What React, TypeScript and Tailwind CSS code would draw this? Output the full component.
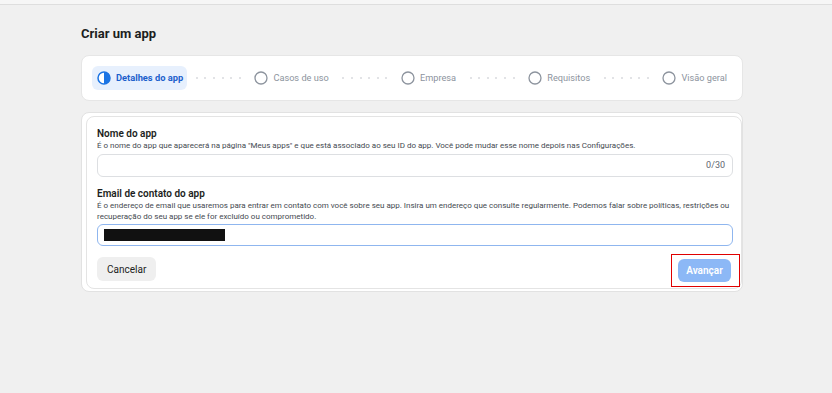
import React from "react";

function Dots() {
  return (
    <div className="flex flex-1 items-center justify-evenly px-[2px]">
      {Array.from({ length: 6 }).map((_, i) => (
        <span key={i} className="h-[2px] w-[2px] rounded-full bg-[#d8dade]" />
      ))}
    </div>
  );
}

function EmptyCircle() {
  return (
    <svg width="14" height="14" viewBox="0 0 14 14" className="shrink-0">
      <circle cx="7" cy="7" r="6" fill="none" stroke="#8d949e" strokeWidth="1.3" />
    </svg>
  );
}

function HalfCircle() {
  return (
    <svg width="14" height="14" viewBox="0 0 14 14" className="shrink-0">
      <circle cx="7" cy="7" r="6" fill="#ffffff" stroke="#1b74e4" strokeWidth="1.5" />
      <path d="M7 1 A6 6 0 0 1 7 13 Z" fill="#1b74e4" />
    </svg>
  );
}

function Step({ label }: { label: string }) {
  return (
    <div className="flex items-center gap-[5px] px-[5px] h-[24px]">
      <EmptyCircle />
      <span className="text-[9.2px] text-[#8d949e] whitespace-nowrap">{label}</span>
    </div>
  );
}

export default function App() {
  return (
    <div className="w-[832px] h-[393px] overflow-hidden bg-[#f0f0f0] font-['Roboto',sans-serif]">
      <div className="h-[5px] bg-[#f6f6f6] border-b border-[#dedede]" />
      <div className="ml-[81px] w-[662px]">
        <h1 className="mt-[21px] text-[13px] leading-[16px] font-bold text-[#1c1e21]">Criar um app</h1>

        <div className="mt-[13px] h-[46px] rounded-lg bg-white border border-[#e6e6e6] flex items-center pl-[10px] pr-[10px]">
          <div className="flex items-center gap-[5px] pl-[5px] pr-[4px] h-[24px] rounded-md bg-[#e7f0fd]">
            <HalfCircle />
            <span className="text-[9.3px] font-bold text-[#1b5fcc] whitespace-nowrap">Detalhes do app</span>
          </div>
          <Dots />
          <Step label="Casos de uso" />
          <Dots />
          <Step label="Empresa" />
          <Dots />
          <Step label="Requisitos" />
          <Dots />
          <Step label="Visão geral" />
        </div>

        <div className="mt-[11px] rounded-lg bg-white border border-[#e2e2e2] pt-[3px] pl-[4px] pb-[2px]">
          <div className="rounded-lg bg-white border border-[#e4e4e4] pt-[10px] pl-[10px] pr-[8px] pb-[6px]">
            <div className="text-[10px] leading-[13px] font-semibold text-[#1c1e21]">Nome do app</div>
            <div className="text-[8px] leading-[11px] text-[#444950]">
              É o nome do app que aparecerá na página "Meus apps" e que está associado ao seu ID do app. Você pode mudar esse nome depois nas Configurações.
            </div>
            <div className="mt-[3px] h-[23px] rounded-md border border-[#dddfe2] flex items-center justify-end pr-[7px]">
              <span className="text-[9px] text-[#606770]">0/30</span>
            </div>

            <div className="mt-[10px] text-[10px] leading-[13px] font-semibold text-[#1c1e21]">Email de contato do app</div>
            <div className="text-[8px] leading-[11px] text-[#444950]">
              É o endereço de email que usaremos para entrar em contato com você sobre seu app. Insira um endereço que consulte regularmente. Podemos falar sobre políticas, restrições ou recuperação do seu app se ele for excluído ou comprometido.
            </div>
            <div className="mt-[2px] h-[22px] rounded-md border border-[#8fb6ef] flex items-center pl-[6px]">
              <div className="h-[12px] w-[121px] bg-[#111111]" />
            </div>

            <div className="mt-[11px] flex items-start justify-between">
              <button className="h-[24px] px-[10px] rounded-md bg-[#efefef] text-[10px] text-[#1c1e21]">Cancelar</button>
              <div className="-mt-[3px] -mb-[5px] -mr-[7px] border border-[#e00000] pt-[2px] pb-[4px] pl-[6px] pr-[8px]">
                <button className="h-[23px] w-[53px] rounded-md bg-[#8cb8f6] text-[10px] font-semibold text-white">Avançar</button>
              </div>
            </div>
          </div>
        </div>
      </div>
    </div>
  );
}
